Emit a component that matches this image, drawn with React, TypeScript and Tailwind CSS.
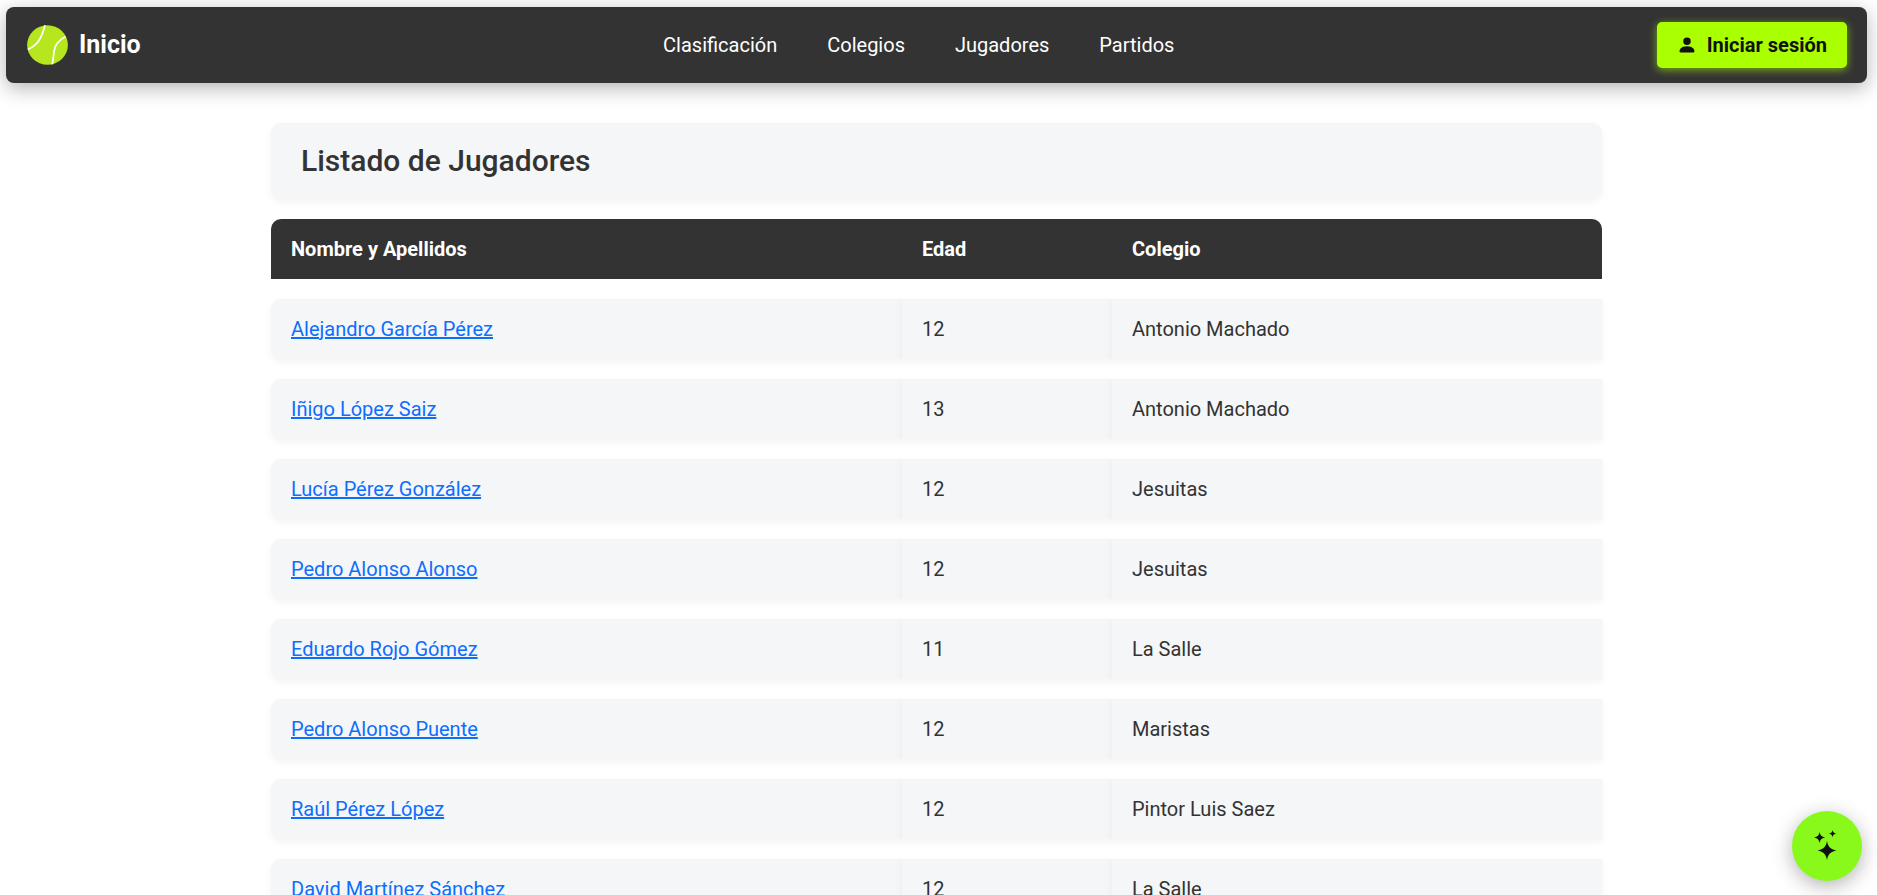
import React from "react";
import { BsPersonFill } from "react-icons/bs";

const links = ["Clasificación", "Colegios", "Jugadores", "Partidos"];

const players = [
  { name: "Alejandro García Pérez", age: 12, school: "Antonio Machado" },
  { name: "Iñigo López Saiz", age: 13, school: "Antonio Machado" },
  { name: "Lucía Pérez González", age: 12, school: "Jesuitas" },
  { name: "Pedro Alonso Alonso", age: 12, school: "Jesuitas" },
  { name: "Eduardo Rojo Gómez", age: 11, school: "La Salle" },
  { name: "Pedro Alonso Puente", age: 12, school: "Maristas" },
  { name: "Raúl Pérez López", age: 12, school: "Pintor Luis Saez" },
  { name: "David Martínez Sánchez", age: 12, school: "La Salle" },
];

function TennisBall() {
  return (
    <svg viewBox="0 0 41 40" className="h-10 w-[41px]" aria-hidden="true">
      <ellipse cx="20.5" cy="20" rx="20.4" ry="19.8" fill="#b6e61d" />
      <g fill="none" stroke="#fff" strokeWidth="1.8">
        <path d="M18 0.3C16 8 14 13 10.5 17.500C8 20.500 5 22.500 1 24.500" />
        <path d="M38.500 11.500C34 14 27.800 19.500 27 26.500C26.500 31 26.500 34 25.200 39.200" />
      </g>
    </svg>
  );
}

function Sparkles() {
  return (
    <svg viewBox="0 0 34 34" className="size-[34px]" fill="#111" aria-hidden="true">
      <path d="M17 12C18 17.500 20.500 20.500 26.500 21.500C20.500 22.500 18 25.500 17 31C16 25.500 13.500 22.500 7.500 21.500C13.500 20.500 16 17.500 17 12Z" />
      <path d="M9.600 3C10.200 6.400 11.700 7.900 15.200 8.500C11.700 9.100 10.200 10.600 9.600 14.100C9 10.600 7.500 9.100 4 8.500C7.500 7.900 9 6.400 9.600 3Z" />
      <path d="M22.600 0.900C23 3.200 24 4.200 26.400 4.600C24 5 23 6 22.600 8.400C22.200 6 21.200 5 18.800 4.600C21.200 4.200 22.200 3.200 22.600 0.900Z" />
    </svg>
  );
}

function Navbar() {
  return (
    <nav className="flex h-[76px] items-center justify-between rounded-lg bg-[#333] pr-5 pl-[21px] shadow-[0_5px_20px_rgba(0,0,0,0.3)]">
      <a href="#inicio" className="flex items-center gap-[11px] text-[25px] leading-8 font-bold text-white">
        <TennisBall />
        Inicio
      </a>
      <ul className="flex pl-10">
        {links.map((link) => (
          <li key={link}>
            <a href={"#" + link} className="px-[25px] text-xl text-white">
              {link}
            </a>
          </li>
        ))}
      </ul>
      <button
        type="button"
        className="flex h-[46px] items-center gap-[10px] rounded-[5px] bg-[#aaff00] px-5 text-xl font-bold text-[#111] shadow-[0_2px_8px_rgba(170,255,0,0.6)]"
      >
        <BsPersonFill size={20} />
        Iniciar sesión
      </button>
    </nav>
  );
}

const cell = "h-[60px] bg-[#f5f6f8] px-5 text-left shadow-[0_3px_8px_rgba(0,0,0,0.05)]";

export default function App() {
  return (
    <div className="h-screen overflow-hidden bg-white pt-[7px] pr-[10px] pl-[6px] font-[Roboto,sans-serif] text-[#333]">
      <Navbar />
      <main className="mx-auto mt-10 max-w-[1331px]">
        <header className="rounded-[10px] bg-[#f5f6f8] px-[30px] py-5 shadow-[0_3px_8px_rgba(0,0,0,0.05)]">
          <h1 className="text-3xl leading-9 font-medium">Listado de Jugadores</h1>
        </header>
        <table className="w-full table-fixed border-separate border-spacing-x-0 border-spacing-y-5 text-xl">
          <colgroup>
            <col className="w-[631px]" />
            <col className="w-[210px]" />
            <col />
          </colgroup>
          <thead>
            <tr className="text-left text-white">
              <th className="h-[60px] rounded-tl-[10px] bg-[#333] px-5">Nombre y Apellidos</th>
              <th className="h-[60px] bg-[#333] px-5">Edad</th>
              <th className="h-[60px] rounded-tr-[10px] bg-[#333] px-5">Colegio</th>
            </tr>
          </thead>
          <tbody>
            {players.map((player) => (
              <tr key={player.name}>
                <td className={cell + " rounded-l-[10px]"}>
                  <a href="#jugador" className="text-[#0d6efd] underline">
                    {player.name}
                  </a>
                </td>
                <td className={cell}>{player.age}</td>
                <td className={cell}>{player.school}</td>
              </tr>
            ))}
          </tbody>
        </table>
      </main>
      <button
        type="button"
        aria-label="Asistente"
        className="fixed right-[15px] bottom-[14px] flex size-[70px] items-center justify-center rounded-full bg-[#88f91a] shadow-[0_5px_20px_rgba(0,0,0,0.3)]"
      >
        <Sparkles />
      </button>
    </div>
  );
}
